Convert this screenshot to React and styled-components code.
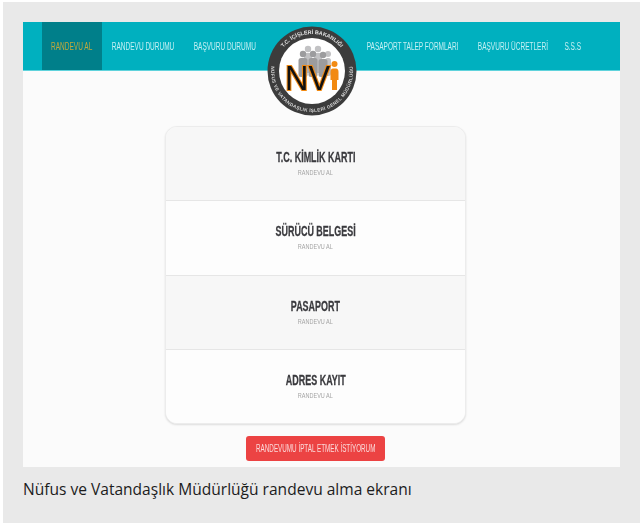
import React from 'react';
import styled, { createGlobalStyle } from 'styled-components';

const leftLinks = [
  { label: 'RANDEVU AL', width: 60 },
  { label: 'RANDEVU DURUMU', width: 82 },
  { label: 'BAŞVURU DURUMU', width: 82 },
];
const rightLinks = [
  { label: 'PASAPORT TALEP FORMLARI', width: 112 },
  { label: 'BAŞVURU ÜCRETLERİ', width: 87 },
  { label: 'S.S.S', width: 34 },
];
const services = ['T.C. KİMLİK KARTI', 'SÜRÜCÜ BELGESİ', 'PASAPORT', 'ADRES KAYIT'];

const Logo = () => (
  <LogoSvg viewBox="0 0 90 90" aria-label="NVİ">
    <defs>
      <path id="arcTop" d="M8 45 A37 37 0 0 1 82 45" />
      <path id="arcBottom" d="M5.4 34.4 A41 41 0 1 0 84.6 34.4" />
    </defs>
    <circle cx="45" cy="45" r="44.5" fill="#3c3c3c" />
    <circle cx="45" cy="45" r="33" fill="#fff" />
    <text fontFamily="Liberation Sans" fontSize="5.4" fontWeight="700" fill="#e4e4e4">
      <textPath href="#arcTop" startOffset="50%" textAnchor="middle">T.C. İÇİŞLERİ BAKANLIĞI</textPath>
    </text>
    <text fontFamily="Liberation Sans" fontSize="4.7" fontWeight="700" fill="#d8d8d8">
      <textPath href="#arcBottom" startOffset="50%" textAnchor="middle" textLength="138">NÜFUS VE VATANDAŞLIK İŞLERİ GENEL MÜDÜRLÜĞÜ</textPath>
    </text>
    <g fill="#c2c2c4">
      <circle cx="41" cy="23" r="3.2" />
      <circle cx="51" cy="23" r="3.2" />
      <circle cx="61" cy="28" r="3" />
      <rect x="37" y="27" width="8" height="20" rx="2.5" />
      <rect x="47" y="27" width="8" height="20" rx="2.5" />
      <rect x="58" y="32" width="6" height="18" rx="2.5" />
    </g>
    <g fill="#9c9c9e">
      <circle cx="36" cy="28" r="3.2" />
      <circle cx="46" cy="28" r="3.2" />
      <circle cx="56" cy="29" r="3.2" />
      <rect x="31.5" y="32" width="9" height="19" rx="2.5" />
      <rect x="41.5" y="32" width="9" height="19" rx="2.5" />
      <rect x="51.5" y="33" width="9" height="18" rx="2.5" />
    </g>
    <circle cx="67.5" cy="38" r="3" fill="#f28a12" />
    <path d="M63.5 46 Q63.5 42.5 66 42.5 H69 Q71.5 42.5 71.5 46 V54 H70 V64 H65 V54 H63.5 Z" fill="#f28a12" />
    <text
      x="18"
      y="64"
      fontFamily="Liberation Sans"
      fontSize="35"
      fontWeight="400"
      fill="#111"
      stroke="#f28a12"
      strokeWidth="2.2"
      paintOrder="stroke"
      textLength="45"
      lengthAdjust="spacingAndGlyphs"
    >
      NV
    </text>
  </LogoSvg>
);

const App = () => (
  <Frame>
    <GlobalStyle />
    <Screen>
      <Header>
        <Nav>
          {leftLinks.map((link, i) => (
            <NavLink key={link.label} $width={link.width} $active={i === 0}>
              <NavLabel>{link.label}</NavLabel>
            </NavLink>
          ))}
        </Nav>
        <LogoGap />
        <Nav>
          {rightLinks.map((link) => (
            <NavLink key={link.label} $width={link.width}>
              <NavLabel>{link.label}</NavLabel>
            </NavLink>
          ))}
        </Nav>
        <Logo />
      </Header>
      <Content>
        <Card>
          {services.map((name, i) => (
            <Row key={name} $shaded={i % 2 === 0}>
              <RowTitle>{name}</RowTitle>
              <RowHint>RANDEVU AL</RowHint>
            </Row>
          ))}
        </Card>
        <CancelButton>
          <CancelLabel>RANDEVUMU İPTAL ETMEK İSTİYORUM</CancelLabel>
        </CancelButton>
      </Content>
    </Screen>
    <Caption>Nüfus ve Vatandaşlık Müdürlüğü randevu alma ekranı</Caption>
  </Frame>
);

export default App;

const GlobalStyle = createGlobalStyle`
  html, body {
    margin: 0;
    padding: 0;
    background: #fff;
    overflow: hidden;
  }
`;

const Frame = styled.div`
  box-sizing: border-box;
  width: 637px;
  height: 521px;
  margin: 2px 0 0 3px;
  padding: 20px 0 0 20px;
  background: #e9e9e9;
`;

const Screen = styled.main`
  width: 597px;
  height: 445px;
  background: #fbfbfb;
  display: flex;
  flex-direction: column;
`;

const Header = styled.header`
  position: relative;
  box-sizing: border-box;
  height: 49px;
  padding-left: 19px;
  display: flex;
  background: #00b0bf;
  border-bottom: 1px solid #5fd3dc;
`;

const Nav = styled.nav`
  display: flex;
`;

const LogoGap = styled.div`
  width: 91px;
`;

const NavLink = styled.a`
  width: ${(props) => props.$width}px;
  height: 48px;
  display: flex;
  align-items: center;
  justify-content: center;
  font-family: "Liberation Sans", sans-serif;
  font-size: 10px;
  white-space: nowrap;
  color: ${(props) => (props.$active ? '#c2a93a' : '#c4f0f3')};
  background: ${(props) => (props.$active ? '#007f8a' : 'transparent')};
`;

const NavLabel = styled.span`
  flex: none;
  transform: scaleX(0.65);
  filter: blur(0.3px);
`;

const LogoSvg = styled.svg`
  position: absolute;
  left: 244px;
  top: 4px;
  width: 90px;
  height: 90px;
  filter: blur(0.35px);
`;

const Content = styled.div`
  flex: 1;
  padding: 55px 12px 0 0;
  display: flex;
  flex-direction: column;
  align-items: center;
`;

const Card = styled.section`
  box-sizing: border-box;
  width: 301px;
  height: 298px;
  border: 1px solid #ececec;
  border-radius: 12px;
  overflow: hidden;
  background: #fcfcfc;
  box-shadow: 0 1px 2px rgba(0, 0, 0, 0.12);
  display: flex;
  flex-direction: column;
`;

const Row = styled.div`
  flex: 1;
  padding-top: 22px;
  box-sizing: border-box;
  display: flex;
  flex-direction: column;
  align-items: center;
  background: ${(props) => (props.$shaded ? '#f7f7f7' : '#fdfdfd')};
  & + & {
    border-top: 1px solid #e6e6e6;
  }
`;

const RowTitle = styled.h2`
  margin: 0;
  font-family: "Liberation Sans", sans-serif;
  font-size: 14px;
  line-height: 16px;
  font-weight: 700;
  white-space: nowrap;
  color: #3a3a3e;
  -webkit-text-stroke: 0.3px #3a3a3e;
  transform: scaleX(0.64);
  filter: blur(0.3px);
`;

const RowHint = styled.span`
  margin-top: 2px;
  font-family: "Liberation Sans", sans-serif;
  font-size: 8px;
  line-height: 12px;
  white-space: nowrap;
  color: #a5a5a5;
  transform: scaleX(0.69);
  filter: blur(0.3px);
`;

const CancelButton = styled.button`
  margin-top: 12px;
  width: 139px;
  height: 25px;
  padding: 0;
  border: 0;
  border-radius: 3px;
  background: #ec4343;
  color: #fbdada;
  display: flex;
  align-items: center;
  justify-content: center;
  font-family: "Liberation Sans", sans-serif;
  font-size: 10px;
  white-space: nowrap;
`;

const CancelLabel = styled.span`
  flex: none;
  transform: scaleX(0.63);
  filter: blur(0.25px);
`;

const Caption = styled.p`
  margin: 11px 0 0;
  font-family: "Open Sans", sans-serif;
  font-size: 15.55px;
  line-height: 22px;
  color: #1c1c1c;
`;
